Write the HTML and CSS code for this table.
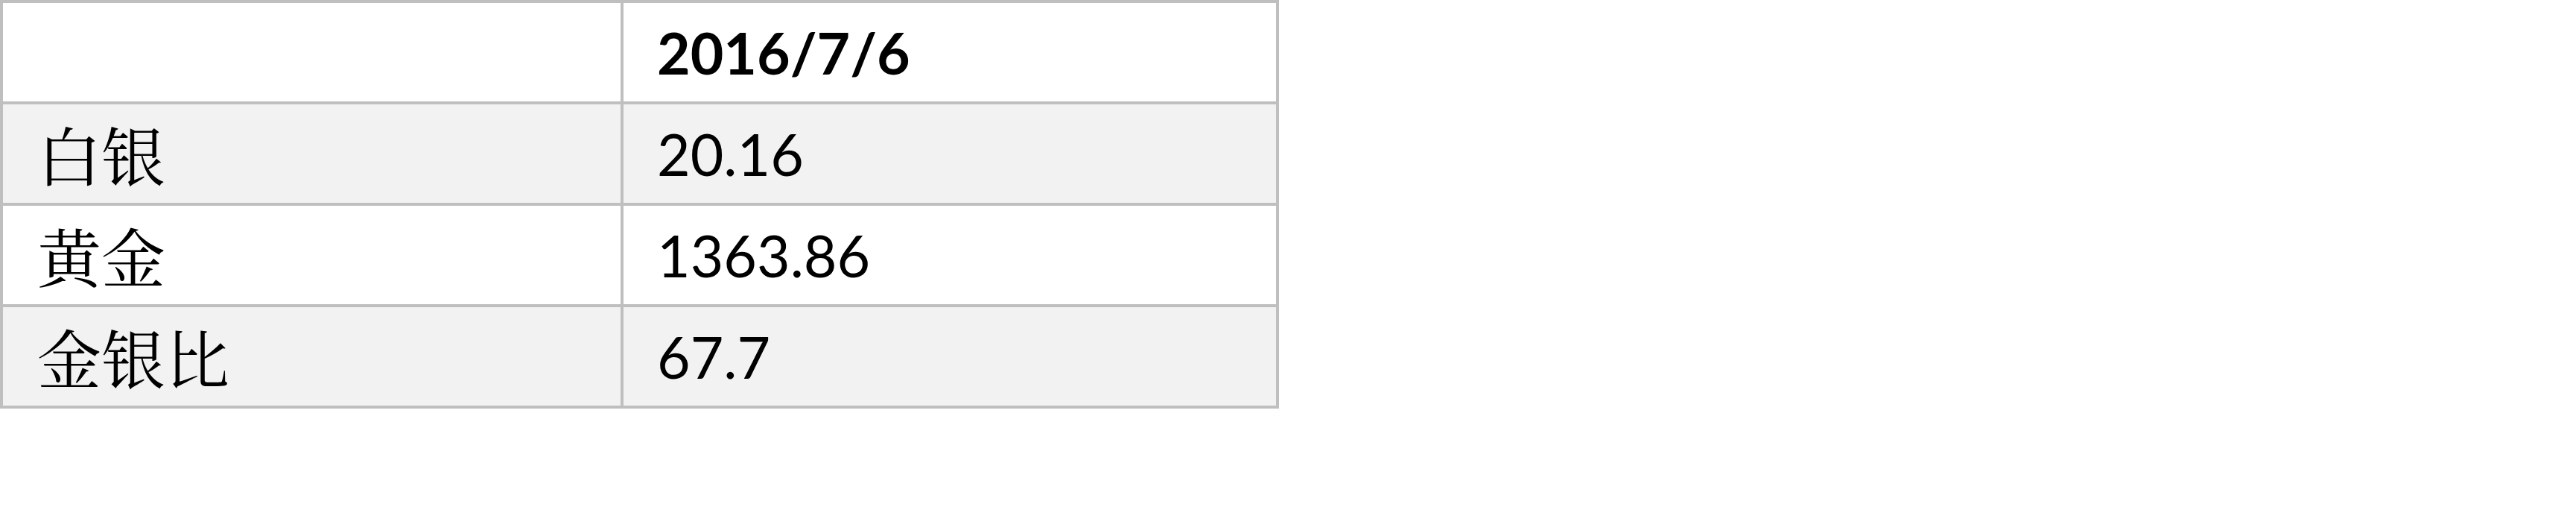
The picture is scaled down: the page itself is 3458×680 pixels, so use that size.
FILE: index.html
```html
<!DOCTYPE html>
<html lang="zh-CN">
<head>
<meta charset="utf-8">
<title>金银比</title>
<link rel="stylesheet" href="styles.css">
</head>
<body>
<table class="sheet">
  <colgroup>
    <col class="col-label">
    <col class="col-value">
  </colgroup>
  <tr class="row-head">
    <td class="label"></td>
    <td class="value head">2016/7/6</td>
  </tr>
  <tr class="row-alt">
    <td class="label zh">白银</td>
    <td class="value">20.16</td>
  </tr>
  <tr class="row-plain">
    <td class="label zh">黄金</td>
    <td class="value">1363.86</td>
  </tr>
  <tr class="row-alt">
    <td class="label zh">金银比</td>
    <td class="value">67.7</td>
  </tr>
</table>
</body>
</html>
```

FILE: styles.css
```css
html, body {
  margin: 0;
  padding: 0;
  background: #ffffff;
}

.sheet {
  border-collapse: collapse;
  table-layout: fixed;
  width: 1713px;
  color: #000000;
}

.col-label {
  width: 833px;
}

.col-value {
  width: 880px;
}

.sheet td {
  border: 4px solid #bfbfbf;
  height: 136px;
  padding: 0 0 0 45px;
  box-sizing: border-box;
  vertical-align: middle;
  white-space: nowrap;
}

.row-alt td {
  background: #f2f2f2;
}

.row-plain td,
.row-head td {
  background: #ffffff;
}

.value {
  font-family: Lato, "Open Sans", sans-serif;
  font-size: 77px;
  font-weight: 400;
}

.value.head {
  font-weight: 700;
}

.label.zh {
  font-family: "Noto Serif CJK SC", "Noto Sans CJK SC", serif;
  font-size: 86px;
  padding-left: 46px;
}
```
